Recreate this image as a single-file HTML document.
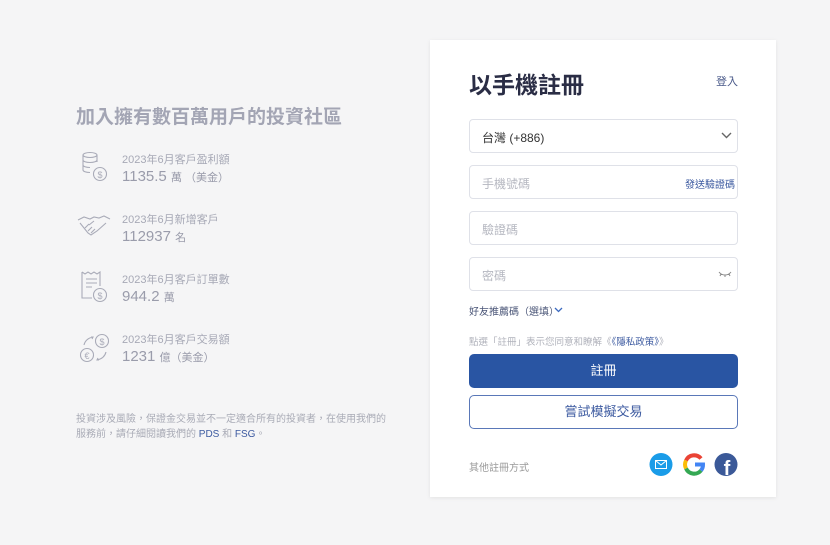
<!DOCTYPE html>
<html><head><meta charset="utf-8"><style>
*{margin:0;padding:0;box-sizing:border-box}
body{width:830px;height:545px;background:#f5f5f6;font-family:"Liberation Sans","Noto Sans CJK TC",sans-serif;position:relative;overflow:hidden}
.a{position:absolute}
.h{left:76px;top:102px;font-size:19px;font-weight:bold;color:#a3a5b4;white-space:nowrap}
.lbl{left:122px;font-size:11px;color:#a7a9b6;white-space:nowrap}
.val{left:122px;font-size:15px;color:#9a9cab;white-space:nowrap}
.val small{font-size:11px}
.card{left:430px;top:40px;width:346px;height:457px;background:#fff;box-shadow:0 1px 4px rgba(0,0,0,.08)}
.in{left:469px;width:269px;height:34px;border:1px solid #dfe1e8;border-radius:4px;font-size:12px;color:#b5b7c0;padding:9px 0 0 12px}
</style></head><body>
<div class="a h">加入擁有數百萬用戶的投資社區</div>

<svg class="a" style="left:78px;top:150px" width="34" height="34" viewBox="0 0 34 34" fill="none" stroke="#a9abb8" stroke-width="1.1"><ellipse cx="12" cy="5" rx="7" ry="2.5"/><path d="M5 5v15c0 1.4 3 2.5 7 2.5M19 5v7M5 10c0 1.4 3 2.5 7 2.5s7-1.1 7-2.5M5 15c0 1.4 3 2.5 7 2.5"/><circle cx="22" cy="24" r="6.5"/><text x="22" y="28" font-size="9" fill="#a9abb8" stroke="none" text-anchor="middle">$</text></svg>
<div class="a lbl" style="top:151px">2023年6月客戶盈利額</div>
<div class="a val" style="top:168px">1135.5 <small>萬 （美金）</small></div>

<svg class="a" style="left:77px;top:212px" width="34" height="26" viewBox="0 0 34 26" fill="none" stroke="#a9abb8" stroke-width="1.1"><path d="M1 8l6-3 6 2 4-2 5 1 5-2 6 3M3 11l8 10 3 2 6-4 9-8M8 16l4-4M11 19l4-4M14 21l4-4M17 9l-5 4"/></svg>
<div class="a lbl" style="top:211px">2023年6月新增客戶</div>
<div class="a val" style="top:228px">112937 <small>名</small></div>

<svg class="a" style="left:79px;top:270px" width="32" height="34" viewBox="0 0 32 34" fill="none" stroke="#a9abb8" stroke-width="1.1"><path d="M3 2l3 2 3-2 3 2 3-2 3 2 3-2v14M3 2v26h10M7 9h11M7 13h11M7 17h6"/><circle cx="21" cy="25" r="6.5"/><text x="21" y="29" font-size="9" fill="#a9abb8" stroke="none" text-anchor="middle">$</text></svg>
<div class="a lbl" style="top:271px">2023年6月客戶訂單數</div>
<div class="a val" style="top:288px">944.2 <small>萬</small></div>

<svg class="a" style="left:78px;top:332px" width="34" height="34" viewBox="0 0 34 34" fill="none" stroke="#a9abb8" stroke-width="1.1"><circle cx="9" cy="23" r="6.5"/><circle cx="24" cy="9" r="6.5"/><text x="24" y="13" font-size="9" fill="#a9abb8" stroke="none" text-anchor="middle">$</text><text x="9" y="27" font-size="9" fill="#a9abb8" stroke="none" text-anchor="middle">€</text><path d="M6 13c1-4 4-7 9-8M13 5l2 0-1 2M28 20c-1 4-4 7-9 8M20 26l-1 2 2 0"/></svg>
<div class="a lbl" style="top:331px">2023年6月客戶交易額</div>
<div class="a val" style="top:348px">1231 <small>億（美金）</small></div>

<div class="a" style="left:76px;top:412px;width:310px;font-size:10px;line-height:15px;color:#a9abb6">投資涉及風險，保證金交易並不一定適合所有的投資者，在使用我們的服務前，請仔細閱讀我們的 <span style="color:#3c5aa0">PDS</span> 和 <span style="color:#3c5aa0">FSG</span>。</div>

<div class="a card"></div>
<div class="a" style="left:469px;top:66px;font-size:23px;font-weight:bold;color:#2a2d45">以手機註冊</div>
<div class="a" style="left:716px;top:73px;font-size:11px;color:#4a5a8a">登入</div>

<div class="a in" style="top:119px;color:#333">台灣 (+886)</div>
<svg class="a" style="left:721px;top:132px" width="11" height="7" viewBox="0 0 11 7" fill="none" stroke="#666" stroke-width="1.4"><path d="M1 1l4.5 4.5L10 1"/></svg>
<div class="a in" style="top:165px">手機號碼</div>
<div class="a" style="left:685px;top:176px;font-size:10px;color:#3c5aa0">發送驗證碼</div>
<div class="a in" style="top:211px">驗證碼</div>
<div class="a in" style="top:257px">密碼</div>
<svg class="a" style="left:718px;top:270px" width="14" height="8" viewBox="0 0 14 8" fill="none" stroke="#888" stroke-width="1"><path d="M1 2c3 4 9 4 12 0M3 4l-1 2M7 5v2M11 4l1 2"/></svg>

<div class="a" style="left:469px;top:303px;font-size:10px;color:#4a5577">好友推薦碼（選填）</div>
<svg class="a" style="left:554px;top:307px" width="9" height="6" viewBox="0 0 9 6" fill="none" stroke="#3c6ac0" stroke-width="1.3"><path d="M1 1l3.5 3.5L8 1"/></svg>
<div class="a" style="left:469px;top:334px;font-size:9.5px;color:#b0b2bb;white-space:nowrap">點選「註冊」表示您同意和瞭解《<span style="color:#3c5aa0">《隱私政策》</span>》</div>

<div class="a" style="left:469px;top:354px;width:269px;height:34px;background:#2955a3;border-radius:5px;color:#fff;font-size:13px;text-align:center;line-height:34px">註冊</div>
<div class="a" style="left:469px;top:395px;width:269px;height:34px;border:1px solid #5a78b8;border-radius:5px;color:#3c5aa0;font-size:13px;text-align:center;line-height:32px">嘗試模擬交易</div>

<div class="a" style="left:469px;top:459px;font-size:10px;color:#999">其他註冊方式</div>
<svg class="a" style="left:649px;top:452px" width="90" height="25" viewBox="0 0 90 25">
<circle cx="12" cy="12.5" r="11.5" fill="#1a9ce8"/><rect x="6.5" y="8.5" width="11" height="8" fill="none" stroke="#fff" stroke-width="1"/><path d="M6.5 8.5l5.5 4.5 5.5-4.5" fill="none" stroke="#fff" stroke-width="1"/>
<g transform="translate(45 12.5)" fill="none" stroke-width="4"><path d="M7 -6A9 9 0 0 0 -8 -4" stroke="#ea4335"/><path d="M-8 -4A9 9 0 0 0 -8 4" stroke="#fbbc05"/><path d="M-8 4A9 9 0 0 0 7 6" stroke="#34a853"/><path d="M7 6A9 9 0 0 0 9 0H1" stroke="#4285f4"/></g>
<circle cx="77" cy="12.5" r="11.5" fill="#3b5998"/><text x="78" y="23" font-size="20" font-weight="bold" fill="#fff" text-anchor="middle" font-family="Liberation Sans">f</text>
</svg>
</body></html>
